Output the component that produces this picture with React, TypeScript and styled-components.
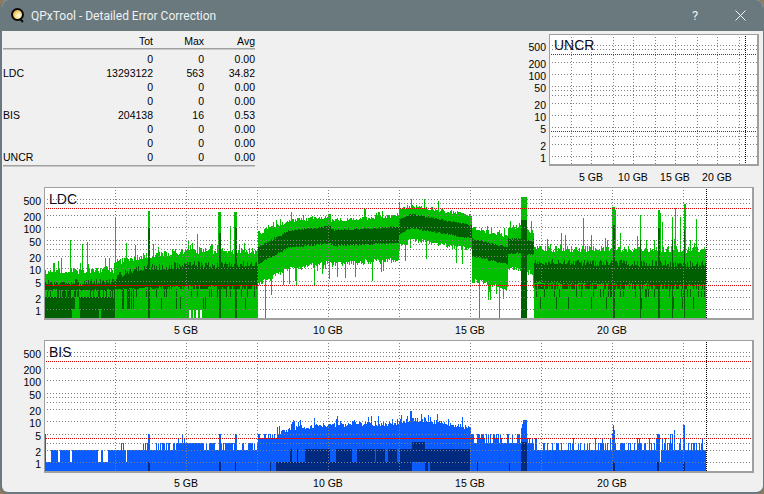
import React from "react";
import styled, { createGlobalStyle } from "styled-components";

// screen coordinates are used for the plot data, the viewBox of each plot starts at the frame corner
const GRID_VALUES = [500, 400, 200, 100, 50, 40, 30, 20, 10, 5, 3, 2, 1];
const TICK_VALUES = [500, 200, 100, 50, 20, 10, 5, 2, 1];
const BIG_GRID_X = [115, 186, 257, 328, 399, 470, 541, 612, 683];
const SMALL_GRID_X = [571, 591, 613, 633, 655, 675, 697, 717, 739];

const rows = [
  ["", "0", "0", "0.00"],
  ["LDC", "13293122", "563", "34.82"],
  ["", "0", "0", "0.00"],
  ["", "0", "0", "0.00"],
  ["BIS", "204138", "16", "0.53"],
  ["", "0", "0", "0.00"],
  ["", "0", "0", "0.00"],
  ["UNCR", "0", "0", "0.00"],
];

const makeRandom = (seed: number) => () => {
  seed = (seed + 0x6d2b79f5) | 0;
  let t = Math.imul(seed ^ (seed >>> 15), 1 | seed);
  t = (t + Math.imul(t ^ (t >>> 7), 61 | t)) ^ t;
  return ((t ^ (t >>> 14)) >>> 0) / 4294967296;
};

const bar = (x: number, top: number, bottom: number, w = 1) =>
  bottom > top ? `M${x} ${Math.round(top)}h${w}V${Math.round(bottom)}h${-w}z` : "";

const within = (x: number, ranges: number[][]) => ranges.some(([a, b]) => x >= a && x < b);

// x, light top, dark top, dark bottom, light bottom
const LDC_KNOTS = [
  [44, 272, 284, 289, 320],
  [115, 270, 282, 289, 320],
  [116, 262, 276, 289, 320],
  [135, 258, 270, 287, 320],
  [186, 251, 265, 285, 320],
  [257.9, 251, 265, 285, 320],
  [258, 235, 248, 263, 282],
  [288, 223, 232, 247, 267],
  [330, 218, 227, 242, 260],
  [331, 222, 231, 245, 262],
  [398, 218, 228, 242, 257],
  [399, 212, 220, 234, 245],
  [411, 208, 215, 227, 237],
  [470, 217, 226, 237, 247],
  [471.9, 217, 226, 237, 247],
  [472, 230, 240, 255, 278],
  [507, 238, 248, 263, 285],
  [508, 230, 240, 253, 265],
  [520, 228, 240, 252, 267],
  [527.9, 233, 242, 253, 270],
  [533, 233, 242, 253, 270],
  [533.1, 249, 262, 282, 320],
  [706, 250, 265, 284, 320],
];

const LIGHT_SPIKES: Record<number, number> = {
  70: 240, 82: 244, 87: 242, 115: 218, 126: 243, 135: 245, 148: 211, 149: 211, 197: 234,
  218: 212, 219: 212, 220: 212, 230: 226, 234: 212, 235: 212, 236: 212, 583: 218,
  612: 207, 613: 207, 614: 207, 615: 210, 640: 215, 658: 210, 659: 210, 660: 213, 662: 222,
  672: 217, 675: 208, 680: 217, 684: 204, 685: 204, 696: 219,
};
const DARK_SPIKES: Record<number, number> = {
  148: 228, 149: 228, 219: 233, 220: 233, 235: 227, 236: 227, 613: 225, 614: 225,
  640: 240, 658: 228, 659: 228, 672: 240, 684: 230,
};
const NOTCHES = [189, 190, 193, 196, 197, 200, 201];

const knotAt = (x: number) => {
  let i = 0;
  while (i < LDC_KNOTS.length - 2 && LDC_KNOTS[i + 1][0] <= x) i++;
  const a = LDC_KNOTS[i];
  const b = LDC_KNOTS[i + 1];
  const t = Math.min(1, (x - a[0]) / (b[0] - a[0]));
  return a.map((v, n) => v + (b[n] - v) * t);
};

const buildLdc = () => {
  const rnd = makeRandom(2024);
  let light = "";
  let dark = "";
  for (let x = 45; x < 706; x++) {
    const [, lt, dt, db, lb] = knotAt(x);
    const r = rnd();
    const flat = x < 258 || x >= 533;
    const top = LIGHT_SPIKES[x] ?? (flat ? lt + 3 - rnd() * 7 - (r > 0.9 ? rnd() * 14 : 0) : lt - rnd() * 4 - (r > 0.9 ? rnd() * 9 : 0));
    const floor = lb >= 320;
    let bottom = floor ? 320 : lb + rnd() * 5 + (r < 0.14 ? rnd() * 20 : 0);
    if (x === 265 || x === 479 || x === 499) bottom = 320;
    if (x === 490 || x === 488) bottom = 300;
    if (NOTCHES.includes(x)) bottom = 310;
    if (x >= 521 && x < 527) bottom = 320;
    light += bar(x, x >= 521 && x < 527 ? 197 : top, bottom);

    const spike = DARK_SPIKES[x];
    const darkTop = spike ?? (flat ? dt + 3 - rnd() * 7 : dt - rnd() * 2);
    dark += bar(x, darkTop, db + rnd() * 2);

    if (flat) {
      if (rnd() < 0.5) dark += bar(x, 284, 289);
      if (rnd() < (x < 115 ? 0.4 : 0.14)) dark += bar(x, 289, 297);
      if (x < 137) {
        if (x < 115 ? !within(x, [[75, 79]]) : rnd() < 0.3) dark += bar(x, x < 115 ? 297 : 289, 309);
      } else if (rnd() < 0.05) dark += bar(x, 297, 309);
      if (within(x, [[45, 72], [80, 99], [101, 115]])) dark += bar(x, 309, 320);
      if (spike) dark += bar(x, 285, 320);
    }
    if (x >= 521 && x < 527) dark += bar(x, 220, 320);
  }
  return { light, dark };
};

const buildBis = () => {
  const rnd = makeRandom(77);
  let light = "";
  let dark = "";
  let stripe = 2;
  let run = 0;
  const level = (v: number) => 462.3 - 41 * Math.log10(v);
  const bandDark = [
    [290, 292], [297, 298], [305, 330], [336, 338], [338, 352], [357, 375], [376, 385],
    [388, 397], [400, 470],
  ];
  const floorDark = [
    [148, 150], [219, 221], [235, 236], [270, 271], [276, 412], [425, 428], [430, 470],
    [477, 478], [509, 510], [521, 527], [613, 615], [657, 659], [683, 685],
  ];
  const spikes: Record<number, number> = {
    148: 5, 149: 5, 182: 5, 219: 5, 220: 5, 235: 5, 236: 5, 613: 8, 612: 5, 614: 6,
    657: 5, 658: 5, 659: 5, 674: 6, 672: 5, 683: 8, 684: 8, 662: 4, 670: 5, 660: 1,
  };
  for (let x = 45; x < 706; x++) {
    let v = 2;
    const r = rnd();
    if (x < 46) v = 5;
    else if (x < 109) {
      if (run-- <= 0) {
        stripe = rnd() < 0.68 ? 2 : 1;
        run = Math.floor(rnd() * 3);
      }
      v = stripe;
    } else if (x < 115) v = 2;
    else if (x < 127) v = r < 0.25 ? 3 : x === 126 ? 1 : 2;
    else if (x < 143) v = 2;
    else if (x < 176) v = r < 0.45 ? 3 : 2;
    else if (x < 204) v = r < 0.1 ? 4 : 3;
    else if (x < 258) v = r < 0.55 ? 3 : 2;
    else if (x < 277) v = r < 0.3 ? 5 : 4;
    else if (x < 471) {
      const base = x < 295 ? 4.5 + (x - 277) / 12 : x < 325 ? 6 + (x - 295) / 30 : x < 400 ? 7 + (x - 325) / 75 : x < 411 ? 8 + (x - 400) / 5 : 10 - (x - 411) / 15;
      v = base * (1 + (r > 0.8 ? rnd() * 0.9 : rnd() * 0.3));
    } else if (x < 473) v = 5;
    else if (x < 521) v = r < 0.4 ? 5 : r < 0.5 ? 4 : 3;
    else if (x < 527) v = x < 523 ? 7 + (x - 521) * 1.5 : 11;
    else if (x < 533) v = r < 0.3 ? 4 : 3;
    else v = r < 0.04 ? 4 : r < 0.45 ? 3 : 2;
    if (spikes[x]) v = spikes[x];
    light += bar(x, level(v), 471);
    if (within(x, floorDark)) dark += bar(x, 462, 471);
    if (within(x, bandDark)) dark += bar(x, 449, 462);
    if (x >= 412 && x < 425) dark += bar(x, 442, 449);
    if (x >= 521 && x < 527) dark += bar(x, 442, 471);
  }
  return { light, dark };
};

const ldc = buildLdc();
const bis = buildBis();

const GlobalStyle = createGlobalStyle`
  html, body {
    margin: 0;
    width: 764px;
    height: 494px;
    overflow: hidden;
    background: #8f7a5c;
    font-family: "Liberation Sans", "Noto Sans", sans-serif;
  }
`;

const Window = styled.div`
  box-sizing: border-box;
  width: 764px;
  height: 494px;
  display: flex;
  flex-direction: column;
  background: #f0f0f0;
  border: solid #6a797d;
  border-width: 0 1px 2px 2px;
  border-radius: 8px;
  overflow: hidden;
  color: #000;
`;

const TitleBar = styled.div`
  flex: none;
  height: 31px;
  margin: 0 -1px 0 -2px;
  display: flex;
  align-items: center;
  padding-left: 11px;
  background: #6a797d;
  color: #eef1f1;
  font-family: Roboto, sans-serif;
  font-size: 12px;
`;

const TitleText = styled.span`
  margin-left: 6px;
  flex: 1;
`;

const HelpMark = styled.span`
  width: 12px;
  margin-right: 34px;
  font-size: 13px;
  text-align: center;
`;

const CloseMark = styled.svg`
  margin-right: 18px;
  display: block;
`;

const TopRow = styled.div`
  flex: none;
  height: 156px;
  display: flex;
  justify-content: space-between;
`;

const StatsTable = styled.div`
  width: 252px;
  margin-left: 1px;
  padding-top: 3px;
  font-size: 10.5px;
`;

const StatsHead = styled.div`
  border-bottom: 1px solid #a0a0a0;
  height: 14px;
  margin-bottom: 3px;
  box-shadow: 0 1px 0 #c8c8c8;
`;

const StatsBody = styled.div`
  border-bottom: 1px solid #a0a0a0;
  padding-bottom: 1px;
  box-shadow: 0 1px 0 #c8c8c8;
`;

const StatsRow = styled.div`
  display: grid;
  grid-template-columns: 100px 50px 51px 51px;
  height: 14px;
  line-height: 14px;
  color: #000;
`;

const Cell = styled.span`
  text-align: right;
  white-space: nowrap;
`;

const NameCell = styled.span`
  text-align: left;
`;

const ChartBlock = styled.div<{ $axis: number; $right: number; $top: number }>`
  flex: none;
  display: grid;
  grid-template-columns: ${(p) => p.$axis}px auto;
  justify-content: start;
  margin-top: ${(p) => p.$top}px;
  margin-right: ${(p) => p.$right}px;
`;

const YAxis = styled.div`
  position: relative;
`;

const YTick = styled.span`
  position: absolute;
  right: 3px;
  line-height: 12px;
  font-size: 10.5px;
  color: #000;
`;

const XAxis = styled.div`
  grid-column: 2;
  position: relative;
  height: 20px;
`;

const XTick = styled.span`
  position: absolute;
  top: 4px;
  transform: translateX(-50%);
  line-height: 12px;
  font-size: 10.5px;
  white-space: nowrap;
  color: #000;
`;

const Frame = styled.div<{ $w: number; $h: number }>`
  position: relative;
  box-sizing: border-box;
  width: ${(p) => p.$w}px;
  height: ${(p) => p.$h}px;
  border: solid #a0a0a0;
  border-width: 1px 2px 2px 1px;
  background: #fff;
`;

const Plot = styled.svg`
  display: block;
  width: 100%;
  height: 100%;
  path {
    shape-rendering: crispEdges;
  }
`;

const ChartTitle = styled.span`
  position: absolute;
  left: 4px;
  font-size: 14px;
  line-height: 16px;
  color: #0c0c1c;
`;

type ChartProps = {
  title: string;
  x: number;
  y: number;
  w: number;
  h: number;
  one: number;
  axis: number;
  right: number;
  top: number;
  gridX: number[];
  blackX: number;
  labels: [string, number][];
  fill?: { light: string; dark: string; lightColor: string; darkColor: string };
};

const Chart = ({ title, x, y, w, h, one, axis, right, top, gridX, blackX, labels, fill }: ChartProps) => {
  const yOf = (v: number) => Math.round(one - 41 * Math.log10(v)) + 0.5;
  const bottom = y + h;
  return (
    <ChartBlock $axis={axis} $right={right} $top={top}>
      <YAxis>
        {TICK_VALUES.map((v) => (
          <YTick key={v} style={{ top: yOf(v) - y - 5 }}>
            {v}
          </YTick>
        ))}
      </YAxis>
      <Frame $w={w} $h={h}>
        <Plot viewBox={`${x + 1} ${y + 1} ${w - 3} ${h - 3}`} preserveAspectRatio="none">
          {fill && <path d={fill.light} fill={fill.lightColor} />}
          {fill && <path d={fill.dark} fill={fill.darkColor} />}
          {gridX.map((gx) => (
            <line key={gx} x1={gx + 0.5} x2={gx + 0.5} y1={y} y2={bottom} stroke="#808080" strokeDasharray="1 2" />
          ))}
          {GRID_VALUES.map((v) => (
            <line key={v} x1={x} x2={x + w} y1={yOf(v)} y2={yOf(v)} stroke="#808080" strokeDasharray="1 2" />
          ))}
          {[300, 4].map((v) => (
            <line key={v} x1={x} x2={x + w} y1={yOf(v)} y2={yOf(v)} stroke="#d80000" strokeDasharray="1 1" />
          ))}
          <line x1={blackX + 0.5} x2={blackX + 0.5} y1={y} y2={bottom} stroke="#000" strokeDasharray="1 1" />
        </Plot>
        <ChartTitle style={{ top: yOf(500) - y - 10 }}>{title}</ChartTitle>
      </Frame>
      <XAxis>
        {labels.map(([text, lx]) => (
          <XTick key={text} style={{ left: lx - x }}>
            {text}
          </XTick>
        ))}
      </XAxis>
    </ChartBlock>
  );
};

const bigLabels: [string, number][] = [
  ["5 GB", 186],
  ["10 GB", 328],
  ["15 GB", 470],
  ["20 GB", 612],
];

const smallLabels: [string, number][] = [
  ["5 GB", 591],
  ["10 GB", 633],
  ["15 GB", 675],
  ["20 GB", 717],
];

const AppIcon = () => (
  <svg width="14" height="15" viewBox="0 0 14 15">
    <defs>
      <radialGradient id="disc" cx="0.6" cy="0.6" r="0.6">
        <stop offset="0" stopColor="#fffbe8" />
        <stop offset="0.6" stopColor="#f8d877" />
        <stop offset="1" stopColor="#d8902a" />
      </radialGradient>
    </defs>
    <circle cx="6.5" cy="6.5" r="5.5" fill="url(#disc)" stroke="#0a0a0a" strokeWidth="2" />
    <path d="M9 11l3 3" stroke="#0a0a0a" strokeWidth="2" />
  </svg>
);

const App = () => {
  return (
    <Window>
      <GlobalStyle />
      <TitleBar>
        <AppIcon />
        <TitleText>QPxTool - Detailed Error Correction</TitleText>
        <HelpMark>?</HelpMark>
        <CloseMark width="11" height="11" viewBox="0 0 11 11">
          <path d="M0.5 0.5l10 10M10.5 0.5l-10 10" stroke="#f2f4f4" strokeWidth="1" fill="none" />
        </CloseMark>
      </TitleBar>
      <TopRow>
        <StatsTable>
          <StatsHead>
            <StatsRow>
              <NameCell />
              <Cell>Tot</Cell>
              <Cell>Max</Cell>
              <Cell>Avg</Cell>
            </StatsRow>
          </StatsHead>
          <StatsBody>
            {rows.map((row, i) => (
              <StatsRow key={i}>
                <NameCell>{row[0]}</NameCell>
                <Cell>{row[1]}</Cell>
                <Cell>{row[2]}</Cell>
                <Cell>{row[3]}</Cell>
              </StatsRow>
            ))}
          </StatsBody>
        </StatsTable>
        <Chart
          title="UNCR"
          x={549}
          y={34}
          w={210}
          h={132}
          one={156}
          axis={28}
          right={4}
          top={3}
          gridX={SMALL_GRID_X}
          blackX={745}
          labels={smallLabels}
        />
      </TopRow>
      <Chart
        title="LDC"
        x={44}
        y={187}
        w={710}
        h={133}
        one={309.3}
        axis={42}
        right={0}
        top={0}
        gridX={BIG_GRID_X}
        blackX={706}
        labels={bigLabels}
        fill={{ ...ldc, lightColor: "#00c000", darkColor: "#005f00" }}
      />
      <Chart
        title="BIS"
        x={44}
        y={340}
        w={710}
        h={133}
        one={462.3}
        axis={42}
        right={0}
        top={0}
        gridX={BIG_GRID_X}
        blackX={706}
        labels={bigLabels}
        fill={{ ...bis, lightColor: "#0a5cff", darkColor: "#002a80" }}
      />
    </Window>
  );
};

export default App;
